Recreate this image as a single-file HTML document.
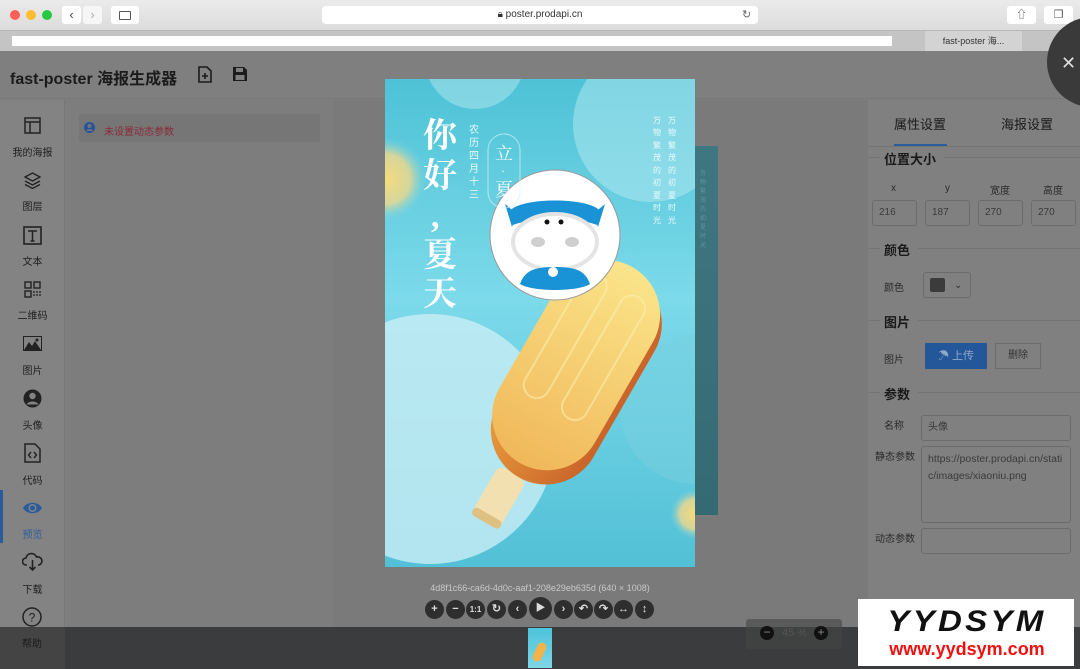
<!DOCTYPE html>
<html><head><meta charset="utf-8"><style>
*{margin:0;padding:0;box-sizing:border-box}
html,body{width:1080px;height:669px;overflow:hidden}
body{position:relative;background:#7f7f7f;font-family:"Liberation Sans","Noto Sans CJK SC",sans-serif}
.abs{position:absolute}
.side div.lbl{position:absolute;width:65px;text-align:center;font-size:10px;color:#1e1e1e}
.inp{position:absolute;border:1px solid #6c6c6c;border-radius:3px;background:#808080;font-size:10px;color:#3a3a3a;padding:0 6px;line-height:24px}
.sec{position:absolute;left:884px;font-size:13px;font-weight:bold;color:#1a1a1a}
.lab{position:absolute;font-size:10px;color:#2a2a2a}
.hl{position:absolute;left:868px;right:0;height:1px;background:#747474}
.tb{position:absolute;top:600px;width:19px;height:19px;border-radius:50%;background:#2e2e2e;color:#ddd;font-size:11px;font-weight:bold;text-align:center;line-height:19px}
</style></head><body>
<div class="abs" style="left:0;top:0;width:1080px;height:30px;background:linear-gradient(#ebebeb,#dcdcdc)"></div>
<div class="abs" style="left:10px;top:10px;width:10px;height:10px;border-radius:50%;background:#fe5f57"></div>
<div class="abs" style="left:26px;top:10px;width:10px;height:10px;border-radius:50%;background:#febc2e"></div>
<div class="abs" style="left:42px;top:10px;width:10px;height:10px;border-radius:50%;background:#28c840"></div>
<div class="abs" style="left:62px;top:6px;width:19px;height:18px;background:#fff;border-radius:3px;font-size:13px;text-align:center;line-height:18px;color:#444">‹</div>
<div class="abs" style="left:83px;top:6px;width:19px;height:18px;background:#f6f6f6;border-radius:3px;font-size:13px;text-align:center;line-height:18px;color:#aaa">›</div>
<div class="abs" style="left:111px;top:6px;width:28px;height:18px;background:#fff;border-radius:3px"><div class="abs" style="left:8px;top:5px;width:12px;height:9px;border:1px solid #555;border-radius:1px"></div></div>
<div class="abs" style="left:322px;top:6px;width:436px;height:18px;background:#fff;border-radius:4px;font-size:10px;color:#333;text-align:center;line-height:18px">🔒︎ poster.prodapi.cn</div>
<div class="abs" style="left:742px;top:8px;font-size:11px;color:#666">↻</div>
<div class="abs" style="left:1007px;top:6px;width:29px;height:18px;background:#fff;border-radius:3px;font-size:11px;text-align:center;line-height:18px;color:#555">⇧</div>
<div class="abs" style="left:1044px;top:6px;width:29px;height:18px;background:#fff;border-radius:3px;font-size:11px;text-align:center;line-height:18px;color:#555">❐</div>
<div class="abs" style="left:0;top:30px;width:1080px;height:21px;background:#c4c4c4;border-top:1px solid #b8b8b8"></div>
<div class="abs" style="left:12px;top:36px;width:880px;height:10px;background:#fff"></div>
<div class="abs" style="left:925px;top:31px;width:97px;height:20px;background:#d3d3d3;font-size:9px;color:#333;text-align:center;line-height:20px">fast-poster 海...</div>
<div class="abs" style="left:1062px;top:33px;font-size:13px;color:#777">+</div>
<div class="abs" style="left:0;top:51px;width:1080px;height:48px;background:#7f7f7f;border-bottom:1px solid #787878"></div>
<div class="abs" style="left:10px;top:65px;font-size:16px;font-weight:bold;color:#1b1b1b">fast-poster 海报生成器</div>
<svg class="abs" style="left:197px;top:66px" width="16" height="17" viewBox="0 0 16 17"><path d="M2 1h8l4 4v11H2z" fill="none" stroke="#1b1b1b" stroke-width="1.6"/><path d="M8 7v6M5 10h6" stroke="#1b1b1b" stroke-width="1.6"/></svg>
<svg class="abs" style="left:232px;top:66px" width="16" height="16" viewBox="0 0 16 16"><path d="M1 1h11l3 3v11H1z" fill="#1b1b1b"/><rect x="4" y="2" width="7" height="4" fill="#7f7f7f"/><rect x="3.5" y="9" width="9" height="5" fill="#7f7f7f"/></svg>
<div class="abs side" style="left:0;top:100px;width:65px;height:527px;background:#838383;border-right:1px solid #777">
<svg class="abs" style="left:24px;top:17px" width="17" height="17"><rect x="1" y="1" width="15" height="15" fill="none" stroke="#222" stroke-width="1.5"/><path d="M1 5h15M6 5v11" stroke="#222" stroke-width="1.5"/></svg>
<div class="lbl" style="top:44px">我的海报</div>
<svg class="abs" style="left:24px;top:72px" width="17" height="17"><path d="M8.5 1L16 5 8.5 9 1 5z M1 9l7.5 4 7.5-4 M1 12.5l7.5 4 7.5-4" fill="none" stroke="#222" stroke-width="1.3"/></svg>
<div class="lbl" style="top:98px">图层</div>
<svg class="abs" style="left:23px;top:126px" width="19" height="19"><rect x="1" y="1" width="17" height="17" fill="none" stroke="#222" stroke-width="1.6"/><path d="M5 5h9M9.5 5v10M7.5 15h4" stroke="#222" stroke-width="1.5"/></svg>
<div class="lbl" style="top:153px">文本</div>
<svg class="abs" style="left:24px;top:181px" width="17" height="17"><rect x="1" y="1" width="6" height="6" fill="none" stroke="#222" stroke-width="1.4"/><rect x="10" y="1" width="6" height="6" fill="none" stroke="#222" stroke-width="1.4"/><rect x="1" y="10" width="6" height="6" fill="none" stroke="#222" stroke-width="1.4"/><path d="M10 10v6M13 10v6M16 10v6" stroke="#222" stroke-width="1.3" stroke-dasharray="2 1"/></svg>
<div class="lbl" style="top:207px">二维码</div>
<svg class="abs" style="left:23px;top:236px" width="19" height="15"><rect x="0.5" y="0.5" width="18" height="14" fill="none" stroke="#222"/><path d="M1 14L6 6 9 10 12 5 18 14z" fill="#222"/><circle cx="14" cy="4" r="1.5" fill="#222"/></svg>
<div class="lbl" style="top:262px">图片</div>
<svg class="abs" style="left:23px;top:289px" width="19" height="19"><circle cx="9.5" cy="9.5" r="9" fill="#222"/><circle cx="9.5" cy="7" r="3.2" fill="#838383"/><path d="M3.5 15.5c2-4 10-4 12 0" fill="#838383"/></svg>
<div class="lbl" style="top:317px">头像</div>
<svg class="abs" style="left:24px;top:343px" width="17" height="20"><path d="M1 1h10l5 5v13H1z" fill="none" stroke="#222" stroke-width="1.5"/><path d="M7 9l-2.5 3 2.5 3M10 9l2.5 3-2.5 3" fill="none" stroke="#222" stroke-width="1.4"/></svg>
<div class="lbl" style="top:372px">代码</div>
<div class="abs" style="left:0;top:390px;width:3px;height:53px;background:#2a5c9c"></div>
<svg class="abs" style="left:22px;top:401px" width="21" height="14"><path d="M1 7C5 0 16 0 20 7 16 14 5 14 1 7z" fill="#2a5c9c"/><circle cx="10.5" cy="7" r="4" fill="#838383"/><circle cx="10.5" cy="7" r="2.5" fill="#2a5c9c"/></svg>
<div class="lbl" style="top:426px;color:#2a5c9c">预览</div>
<svg class="abs" style="left:22px;top:452px" width="21" height="20"><path d="M5 13H4a3.5 3.5 0 0 1 0-7 5.5 5.5 0 0 1 10.5-1A4 4 0 0 1 17 13h-1" fill="none" stroke="#222" stroke-width="1.6"/><path d="M10.5 8v10M7.5 15l3 3 3-3" fill="none" stroke="#222" stroke-width="1.6"/></svg>
<div class="lbl" style="top:481px">下载</div>
<svg class="abs" style="left:22px;top:507px" width="20" height="20"><circle cx="10" cy="10" r="9" fill="none" stroke="#222" stroke-width="1.5"/><text x="10" y="14.5" font-size="12" text-anchor="middle" fill="#222" font-family="Liberation Sans">?</text></svg>
</div>
<div class="abs" style="left:66px;top:100px;width:267px;height:527px;background:#7d7d7d"></div>
<div class="abs" style="left:79px;top:114px;width:241px;height:28px;background:#767676;border-radius:2px"></div>
<svg class="abs" style="left:84px;top:122px" width="11" height="11"><circle cx="5.5" cy="5.5" r="5.5" fill="#24549a"/><circle cx="5.5" cy="4" r="2" fill="#767676"/><path d="M2 9c1-2.5 6-2.5 7 0" fill="#767676"/></svg>
<div class="abs" style="left:104px;top:123px;font-size:10px;color:#8b2a38">未设置动态参数</div>
<div class="abs" style="left:333px;top:100px;width:535px;height:527px;background:#7a7a7a"></div>
<div class="abs" style="left:868px;top:100px;width:212px;height:527px;background:#808080"></div>
<div class="abs" style="left:894px;top:114px;font-size:13px;color:#1a1a1a">属性设置</div>
<div class="abs" style="left:1001px;top:114px;font-size:13px;color:#1a1a1a">海报设置</div>
<div class="hl" style="top:146px"></div>
<div class="abs" style="left:894px;top:144px;width:53px;height:2px;background:#2a5c9c"></div>
<div class="hl" style="top:157px;left:868px;width:12px"></div><div class="hl" style="top:157px;left:944px"></div>
<div class="sec" style="top:149px">位置大小</div>
<div class="lab" style="left:891px;top:183px">x</div><div class="lab" style="left:945px;top:183px">y</div>
<div class="lab" style="left:990px;top:182px">宽度</div><div class="lab" style="left:1043px;top:182px">高度</div>
<div class="inp" style="left:872px;top:200px;width:45px;height:26px">216</div>
<div class="inp" style="left:925px;top:200px;width:45px;height:26px">187</div>
<div class="inp" style="left:978px;top:200px;width:45px;height:26px">270</div>
<div class="inp" style="left:1031px;top:200px;width:45px;height:26px">270</div>
<div class="hl" style="top:248px;left:868px;width:12px"></div><div class="hl" style="top:248px;left:918px"></div>
<div class="sec" style="top:240px">颜色</div>
<div class="lab" style="left:884px;top:279px">颜色</div>
<div class="inp" style="left:923px;top:272px;width:48px;height:26px"><div class="abs" style="left:6px;top:5px;width:15px;height:14px;background:#3b3b3b;border-radius:2px"></div><div class="abs" style="left:30px;top:1px;color:#333">⌄</div></div>
<div class="hl" style="top:320px;left:868px;width:12px"></div><div class="hl" style="top:320px;left:918px"></div>
<div class="sec" style="top:312px">图片</div>
<div class="lab" style="left:884px;top:351px">图片</div>
<div class="abs" style="left:925px;top:343px;width:62px;height:26px;background:#23579a;color:#8fa9c9;font-size:11px;text-align:center;line-height:26px">☂ 上传</div>
<div class="abs" style="left:995px;top:343px;width:46px;height:26px;border:1px solid #6c6c6c;color:#333;font-size:10px;text-align:center;line-height:24px">删除</div>
<div class="hl" style="top:392px;left:868px;width:12px"></div><div class="hl" style="top:392px;left:918px"></div>
<div class="sec" style="top:384px">参数</div>
<div class="lab" style="left:884px;top:417px">名称</div>
<div class="inp" style="left:921px;top:415px;width:150px;height:26px">头像</div>
<div class="lab" style="left:875px;top:448px">静态参数</div>
<div class="inp" style="left:921px;top:446px;width:150px;height:77px;line-height:17px;padding-top:4px;font-size:10.5px;word-break:break-all">https://poster.prodapi.cn/static/images/xiaoniu.png</div>
<div class="lab" style="left:875px;top:530px">动态参数</div>
<div class="inp" style="left:921px;top:528px;width:150px;height:26px"></div>
<div class="abs" style="left:0;top:627px;width:1080px;height:42px;background:#3b3c3e"></div>
<div class="abs" style="left:0;top:627px;width:65px;height:42px;background:#444"></div>
<div class="abs" style="left:22px;top:635px;font-size:10px;color:#1a1a1a">帮助</div>
<div class="abs" style="left:746px;top:619px;width:96px;height:30px;background:#454545;border-radius:3px;opacity:.6"></div>
<div class="abs" style="left:760px;top:626px;width:14px;height:14px;border-radius:50%;background:#111;color:#888;font-size:12px;text-align:center;line-height:13px">−</div>
<div class="abs" style="left:782px;top:627px;font-size:11px;color:#555">45 %</div>
<div class="abs" style="left:814px;top:626px;width:14px;height:14px;border-radius:50%;background:#111;color:#888;font-size:12px;text-align:center;line-height:13px">+</div>
<div class="abs" style="left:528px;top:628px;width:24px;height:40px;background:linear-gradient(#4cc3d9,#7fd6e6)"><div class="abs" style="left:7px;top:14px;width:9px;height:20px;background:#f1b34a;border-radius:5px;transform:rotate(25deg)"></div></div>
<div class="abs" style="left:690px;top:146px;width:28px;height:369px;background:linear-gradient(#3f7781,#356a73);"></div>
<div class="abs" style="left:700px;top:170px;width:8px;font-size:6px;color:#5e96a0;line-height:9px">万物繁茂的初夏时光</div>
<div class="abs" style="left:1047px;top:17px;width:33px;height:90px;overflow:hidden"><div style="width:90px;height:90px;border-radius:50%;background:#3a3a3a"></div></div>
<div class="abs" style="left:1061px;top:53px;font-size:18px;color:#ddd">✕</div>
<svg class="abs" style="left:385px;top:79px" width="310" height="488" viewBox="0 0 310 488">
<defs>
<linearGradient id="bg" x1="0" y1="0" x2="0" y2="1"><stop offset="0" stop-color="#4ec2d6"/><stop offset=".45" stop-color="#7cdaea"/><stop offset="1" stop-color="#52c0d6"/></linearGradient>
<radialGradient id="yl" cx=".5" cy=".5" r=".5"><stop offset="0" stop-color="#f6dc7a"/><stop offset=".6" stop-color="#f2d88a" stop-opacity=".8"/><stop offset="1" stop-color="#7cd4e4" stop-opacity="0"/></radialGradient>
<linearGradient id="popt" x1="0" y1="0" x2="0" y2="1"><stop offset="0" stop-color="#fbe48a"/><stop offset="1" stop-color="#f0b85a"/></linearGradient>
<linearGradient id="pops" x1="0" y1="0" x2="1" y2="0"><stop offset="0" stop-color="#e89a3c"/><stop offset="1" stop-color="#c9642a"/></linearGradient>
</defs>
<rect width="310" height="488" fill="url(#bg)"/>
<circle cx="266" cy="45" r="78" fill="#b6e9f1" opacity=".5"/>
<circle cx="90" cy="-20" r="50" fill="#cdf1f6" opacity=".4"/>
<circle cx="0" cy="100" r="42" fill="url(#yl)"/>
<circle cx="45" cy="360" r="125" fill="#c9eef5" opacity=".8"/>
<circle cx="310" cy="330" r="75" fill="#77d0e0" opacity=".5"/>
<circle cx="310" cy="435" r="25" fill="url(#yl)"/>
<g transform="translate(114,418) rotate(30)"><rect x="-16" y="-28" width="32" height="56" rx="8" fill="#f3e0b0"/><rect x="-16" y="20" width="32" height="9" rx="4" fill="#e0bf82"/></g>
<g transform="translate(190,290) rotate(30)">
<rect x="-50" y="-110" width="110" height="232" rx="55" fill="url(#pops)"/>
<rect x="-56" y="-117" width="110" height="226" rx="55" fill="url(#popt)"/>
<rect x="-38" y="-94" width="26" height="140" rx="13" fill="none" stroke="#fdf0b0" stroke-opacity=".55" stroke-width="2"/>
<rect x="6" y="-94" width="26" height="140" rx="13" fill="none" stroke="#fdf0b0" stroke-opacity=".55" stroke-width="2"/>
</g>
<circle cx="170" cy="156" r="65" fill="#fff" stroke="#999" stroke-width="1"/>
<path d="M125 132c10-14 80-14 90 0l-3 14c-20-8-64-8-84 0z" fill="#1a93d6"/>
<path d="M120 125l12 10-5 13zM220 125l-12 10 5 13z" fill="#1a93d6"/>
<ellipse cx="170" cy="163" rx="42" ry="28" fill="#fff" stroke="#e4e4e4" stroke-width="4"/>
<ellipse cx="153" cy="163" rx="7" ry="5" fill="#cfcfcf"/><ellipse cx="187" cy="163" rx="7" ry="5" fill="#cfcfcf"/>
<circle cx="162" cy="143" r="2.5" fill="#111"/><circle cx="176" cy="143" r="2.5" fill="#111"/>
<path d="M135 205c5-14 15-17 35-17s30 3 35 17c-12 8-58 8-70 0z" fill="#1a93d6"/>
<circle cx="168" cy="193" r="5" fill="#fff"/>
<g fill="#fff" font-family="Liberation Serif,'Noto Serif CJK SC',serif" font-weight="bold" font-size="34">
<text x="38" y="68">你</text><text x="38" y="108">好</text><text x="46" y="148">,</text><text x="38" y="187">夏</text><text x="38" y="226">天</text></g>
<g fill="#eafafd" font-size="10" font-family="Liberation Sans,'Noto Sans CJK SC',sans-serif">
<text x="84" y="54">农</text><text x="84" y="67">历</text><text x="84" y="80">四</text><text x="84" y="93">月</text><text x="84" y="106">十</text><text x="84" y="119">三</text></g>
<rect x="103" y="55" width="32" height="74" rx="16" fill="none" stroke="#d8f4f8" stroke-opacity=".7"/>
<g fill="#fff" font-size="18" font-family="Liberation Serif,'Noto Serif CJK SC',serif"><text x="110" y="81">立</text><text x="116" y="96" font-size="12">·</text><text x="110" y="117">夏</text></g>
<g fill="#eafafd" font-size="8" font-family="Liberation Sans,'Noto Sans CJK SC',sans-serif">
<text x="268" y="44">万</text><text x="268" y="56">物</text><text x="268" y="69">繁</text><text x="268" y="81">茂</text><text x="268" y="94">的</text><text x="268" y="106">初</text><text x="268" y="119">夏</text><text x="268" y="131">时</text><text x="268" y="144">光</text>
<text x="283" y="44">万</text><text x="283" y="56">物</text><text x="283" y="69">繁</text><text x="283" y="81">茂</text><text x="283" y="94">的</text><text x="283" y="106">初</text><text x="283" y="119">夏</text><text x="283" y="131">时</text><text x="283" y="144">光</text></g>
</svg>
<div class="abs" style="left:385px;top:583px;width:310px;text-align:center;font-size:9px;color:#c8c8c8">4d8f1c66-ca6d-4d0c-aaf1-208e29eb635d (640 × 1008)</div>
<div class="tb" style="left:425px">+</div><div class="tb" style="left:446px">−</div><div class="tb" style="left:466px;font-size:8px">1:1</div><div class="tb" style="left:487px">↻</div><div class="tb" style="left:508px">‹</div>
<div class="tb" style="left:529px;top:597px;width:23px;height:23px;line-height:23px;font-size:10px">▶</div>
<div class="tb" style="left:554px">›</div><div class="tb" style="left:574px">↶</div><div class="tb" style="left:594px">↷</div><div class="tb" style="left:614px">↔</div><div class="tb" style="left:635px">↕</div>
<div class="abs" style="left:858px;top:599px;width:216px;height:67px;background:#fff"></div>
<div class="abs" style="left:862px;top:605px;width:210px;text-align:center;font-size:30px;font-weight:900;font-style:italic;color:#111;letter-spacing:3px;transform:scaleX(1.1)">YYDSYM</div>
<div class="abs" style="left:862px;top:639px;width:210px;text-align:center;font-size:18px;font-weight:bold;color:#f01010">www.yydsym.com</div>
</body></html>
